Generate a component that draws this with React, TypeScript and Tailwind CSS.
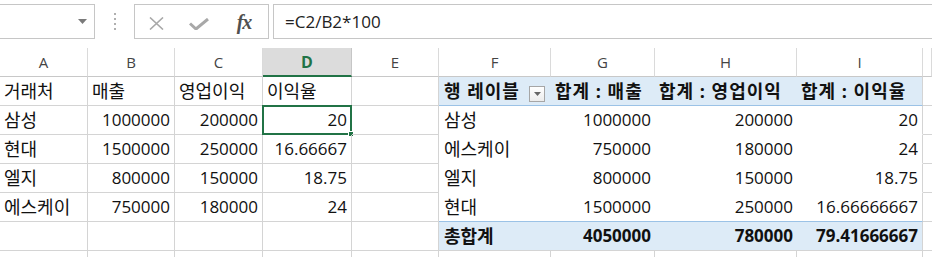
import React from "react";

const FONT = { fontFamily: '"Open Sans", "Noto Sans CJK KR", sans-serif' };

const widths = [88, 87, 88, 89, 87, 112, 104, 142, 126, 9];
const letters = ["A", "B", "C", "D", "E", "F", "G", "H", "I", ""];

type Row = {
  left: string[];
  pivot: string[] | null;
};

const rows: Row[] = [
  { left: ["거래처", "매출", "영업이익", "이익율", ""], pivot: ["행 레이블", "합계 : 매출", "합계 : 영업이익", "합계 : 이익율"] },
  { left: ["삼성", "1000000", "200000", "20", ""], pivot: ["삼성", "1000000", "200000", "20"] },
  { left: ["현대", "1500000", "250000", "16.66667", ""], pivot: ["에스케이", "750000", "180000", "24"] },
  { left: ["엘지", "800000", "150000", "18.75", ""], pivot: ["엘지", "800000", "150000", "18.75"] },
  { left: ["에스케이", "750000", "180000", "24", ""], pivot: ["현대", "1500000", "250000", "16.66666667"] },
  { left: ["", "", "", "", ""], pivot: ["총합계", "4050000", "780000", "79.41666667"] },
  { left: ["", "", "", "", ""], pivot: null },
];

const isNum = (s: string) => /^[0-9.]+$/.test(s);

const FormulaBar = () => (
  <div className="h-[48px] flex items-start pt-[4px]">
    <div className="w-[95px] h-[35px] border-y border-r border-[#c6c6c6] flex items-center justify-end pr-[7px]">
      <svg width="9" height="5" viewBox="0 0 9 5">
        <path d="M0 0 L9 0 L4.5 5 Z" fill="#7a7a7a" />
      </svg>
    </div>
    <div className="w-[39px] h-[35px] flex flex-col items-center justify-center gap-[3px] pl-[1px]">
      <div className="w-[2px] h-[2px] bg-[#b0b0b0]" />
      <div className="w-[2px] h-[2px] bg-[#b0b0b0]" />
      <div className="w-[2px] h-[2px] bg-[#b0b0b0]" />
      <div className="w-[2px] h-[2px] bg-[#b0b0b0]" />
    </div>
    <div className="w-[135px] h-[35px] border border-[#c6c6c6] flex items-center">
      <div className="w-[40px] flex justify-center pl-[3px] pt-[3px]">
        <svg width="15" height="13" viewBox="0 0 15 13">
          <path d="M1 0.5 L14 12.5 M14 0.5 L1 12.5" stroke="#a8a8a8" strokeWidth="1.6" fill="none" />
        </svg>
      </div>
      <div className="w-[47px] flex justify-center pt-[5px]">
        <svg width="20" height="12" viewBox="0 0 20 12">
          <path d="M1 5.5 L7 11 L19 1" stroke="#a8a8a8" strokeWidth="3" fill="none" />
        </svg>
      </div>
      <div
        className="flex-1 flex justify-center pr-[2px] text-[20px] italic text-[#505050] leading-none"
        style={{ fontFamily: '"Liberation Serif", "DejaVu Serif", serif' }}
      >
        <span className="font-bold tracking-[-1px]">fx</span>
      </div>
    </div>
    <div className="w-[4px]" />
    <div className="flex-1 h-[35px] border-y border-l border-[#c6c6c6] flex items-center pl-[11px] text-[17px] text-[#222]">
      =C2/B2*100
    </div>
  </div>
);

const HeaderRow = () => (
  <div className="flex h-[29px]">
    {widths.map((w, i) => {
      const sel = letters[i] === "D";
      return (
        <div
          key={i}
          style={{ width: w }}
          className={
            sel
              ? "shrink-0 h-full flex items-center justify-center bg-[#dcdcdc] border-r border-[#c6c6c6] border-b-2 border-b-[#217346] text-[#217346] font-bold text-[16px]"
              : "shrink-0 h-full flex items-center justify-center border-r border-[#dadada] border-b border-b-[#c8c8c8] text-[#444] text-[15px]"
          }
        >
          {letters[i]}
        </div>
      );
    })}
  </div>
);

const DropButton = () => (
  <div className="w-[16px] h-[16px] border border-[#a6a6a6] bg-gradient-to-b from-white to-[#ececec] flex items-center justify-center mt-[9px]">
    <svg width="7" height="4" viewBox="0 0 7 4">
      <path d="M0 0 L7 0 L3.5 4 Z" fill="#666" />
    </svg>
  </div>
);

const DataRow = ({ row, idx }: { row: Row; idx: number }) => {
  return (
    <div className="flex h-[29px] shrink-0">
      {row.left.map((v, i) => (
        <div
          key={i}
          style={{ width: widths[i] }}
          className={
            "relative shrink-0 h-full border-r border-b border-[#d4d4d4] flex items-center px-[4px] text-[#111] whitespace-nowrap " +
            (isNum(v) ? "justify-end text-[17px]" : "justify-start text-[18px]")
          }
        >
          {v}
          {idx === 1 && i === 3 && (
            <div className="absolute -left-[1px] -top-[1px] -right-[1px] -bottom-[1px] border-2 border-[#217346]">
              <div className="absolute -right-[4px] -bottom-[4px] w-[6px] h-[6px] bg-[#217346] border border-white" />
            </div>
          )}
        </div>
      ))}
      {row.pivot
        ? row.pivot.map((v, j) => {
            const head = idx === 0;
            const total = idx === 5;
            const lastBody = idx === 4;
            const bg = head || total ? "bg-[#ddebf7]" : "bg-white";
            const bb = head || lastBody ? "border-b border-[#9bc2e6]" : total ? "border-b border-[#d4d4d4]" : "border-b border-transparent";
            const align = head ? "justify-start" : isNum(v) ? "justify-end" : "justify-start";
            const size = isNum(v) ? "text-[17px]" : "text-[18px]";
            const pad = j === 0 ? "pl-[5px] pr-[4px]" : head ? "pl-[4px] pr-[2px]" : "px-[4px]";
            return (
              <div
                key={j}
                style={{ width: widths[5 + j] }}
                className={
                  "shrink-0 h-full flex items-center text-[#111] whitespace-nowrap " +
                  [
                    bg,
                    bb,
                    align,
                    pad,
                    size,
                    head || total ? "font-bold" : "",
                    head ? "tracking-[1px]" : "",
                    j === 3 ? "border-r border-r-[#d4d4d4]" : "",
                  ].join(" ")
                }
              >
                {head && j === 0 ? (
                  <div className="flex w-full items-start h-full">
                    <span className="self-center">{v}</span>
                    <div className="flex-1" />
                    <div className="mr-[2px]">
                      <DropButton />
                    </div>
                  </div>
                ) : (
                  v
                )}
              </div>
            );
          })
        : [0, 1, 2, 3].map((j) => (
            <div
              key={j}
              style={{ width: widths[5 + j] }}
              className="shrink-0 h-full border-r border-b border-[#d4d4d4]"
            />
          ))}
      <div style={{ width: widths[9] }} className="shrink-0 h-full border-b border-[#d4d4d4]" />
    </div>
  );
};

export default function App() {
  return (
    <div className="w-[932px] h-[257px] bg-white overflow-hidden" style={FONT}>
      <FormulaBar />
      <HeaderRow />
      <div className="flex flex-col">
        {rows.map((r, i) => (
          <DataRow key={i} row={r} idx={i} />
        ))}
      </div>
    </div>
  );
}
